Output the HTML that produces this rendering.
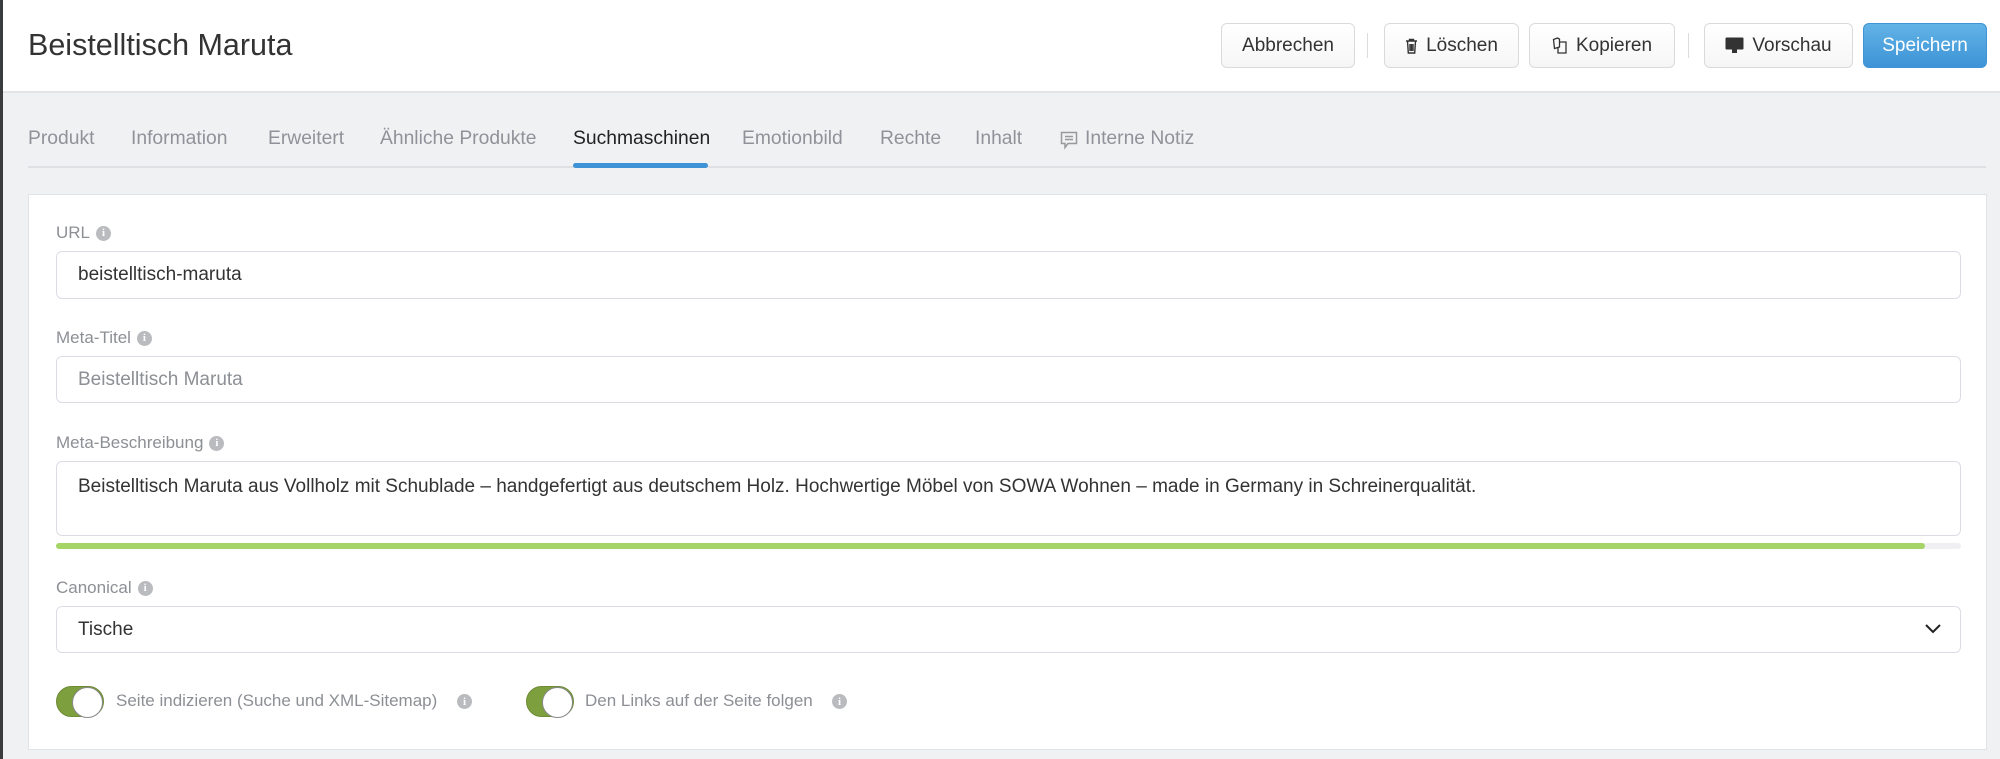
<!DOCTYPE html>
<html><head><meta charset="utf-8"><style>
*{box-sizing:border-box;margin:0;padding:0}
body{width:2000px;height:759px;overflow:hidden;background:#f0f1f3;font-family:"Liberation Sans",sans-serif;position:relative;color:#333}
.a{position:absolute}
.hdr{left:0;top:0;width:2000px;height:93px;background:#fff;border-bottom:2px solid #e3e4e7}
.btn{position:absolute;top:23px;height:45px;border:1px solid #d9dadd;border-radius:6px;background:linear-gradient(#fff,#f6f6f7);font-size:19px;color:#333;display:flex;align-items:center;justify-content:center;gap:8px}
.sep{position:absolute;top:33px;width:1px;height:25px;background:#dcdcdc}
.tab{position:absolute;top:128px;font-size:19.3px;color:#8f9399}
.lbl{position:absolute;left:56px;font-size:17px;color:#8c8f94;display:flex;align-items:center;gap:6px}
.info{width:15px;height:15px;border-radius:50%;background:#b9bbbe;color:#fff;font-size:11px;font-weight:bold;display:inline-flex;align-items:center;justify-content:center;font-family:"Liberation Serif",serif}
.inp{position:absolute;left:56px;width:1905px;border:1px solid #dcdde4;border-radius:6px;background:#fff;font-size:19px;padding-left:21px;display:flex;align-items:center}
.tg{position:absolute;top:686px;width:48px;height:31px;border-radius:16px;background:#7d9f3e;border:1px solid #6e8c35}
.tg::after{content:"";position:absolute;right:0;top:0;width:29px;height:29px;border-radius:50%;background:#fff;border:1px solid #888}
.tl{position:absolute;top:691px;font-size:17px;color:#8c8f94}
</style></head><body>
<div class="a hdr"></div>
<div class="a" style="left:0;top:0;width:3px;height:759px;background:#3a3b3d"></div>
<div class="a" style="left:28px;top:28px;font-size:30.5px;color:#333">Beistelltisch Maruta</div>
<div class="btn" style="left:1221px;width:134px">Abbrechen</div>
<div class="sep" style="left:1367px"></div>
<div class="btn" style="left:1384px;width:135px"><svg width="13" height="16" viewBox="0 0 13 16" fill="none" stroke="#333" stroke-width="1.4"><path d="M1 3h11M4.5 3V1.5h4V3M2.5 3l.8 12h6.4l.8-12M5 6v7M6.5 6v7M8 6v7"/></svg>Löschen</div>
<div class="btn" style="left:1529px;width:146px"><svg width="16" height="17" viewBox="0 0 16 17" fill="none" stroke="#333" stroke-width="1.3"><path d="M1.5 2.5l4-1.5 2 1v8l-5 1.5zM7 5h7v11H6V11"/></svg>Kopieren</div>
<div class="sep" style="left:1688px"></div>
<div class="btn" style="left:1704px;width:149px"><svg width="19" height="17" viewBox="0 0 19 17"><rect x="0.5" y="0.5" width="18" height="12" rx="1" fill="#333"/><rect x="7" y="12" width="5" height="4" fill="#333"/></svg>Vorschau</div>
<div class="btn" style="left:1863px;width:124px;background:linear-gradient(#62b3e6,#3d93d6);border-color:#3e94d4;color:#fff">Speichern</div>

<div class="tab" style="left:28px">Produkt</div>
<div class="tab" style="left:131px">Information</div>
<div class="tab" style="left:268px">Erweitert</div>
<div class="tab" style="left:380px">Ähnliche Produkte</div>
<div class="tab" style="left:573px;color:#222">Suchmaschinen</div>
<div class="tab" style="left:742px">Emotionbild</div>
<div class="tab" style="left:880px">Rechte</div>
<div class="tab" style="left:975px">Inhalt</div>
<svg class="a" style="left:1060px;top:131px" width="18" height="19" viewBox="0 0 18 19" fill="none" stroke="#999" stroke-width="1.5"><path d="M1.5 1.5h15v11H8l-3 4v-4H1.5z M5 5.5h8M5 8.5h8"/></svg>
<div class="tab" style="left:1085px">Interne Notiz</div>
<div class="a" style="left:28px;top:166px;width:1958px;height:2px;background:#dfe0e3"></div>
<div class="a" style="left:573px;top:163px;width:135px;height:5px;border-radius:3px;background:#3d93d6"></div>

<div class="a" style="left:28px;top:194px;width:1959px;height:556px;background:#fff;border:1px solid #e2e3e6"></div>
<div class="lbl" style="top:223px">URL <span class="info">i</span></div>
<div class="inp" style="top:251px;height:48px;color:#333">beistelltisch-maruta</div>
<div class="lbl" style="top:328px">Meta-Titel <span class="info">i</span></div>
<div class="inp" style="top:356px;height:47px;color:#8c8f94">Beistelltisch Maruta</div>
<div class="lbl" style="top:433px">Meta-Beschreibung <span class="info">i</span></div>
<div class="inp" style="top:461px;height:75px;align-items:flex-start;padding-top:14px">Beistelltisch Maruta aus Vollholz mit Schublade – handgefertigt aus deutschem Holz. Hochwertige Möbel von SOWA Wohnen – made in Germany in Schreinerqualität.</div>
<div class="a" style="left:56px;top:543px;width:1905px;height:6px;border-radius:3px;background:#f0f0f2"></div>
<div class="a" style="left:56px;top:543px;width:1869px;height:6px;border-radius:3px;background:#a6d567"></div>
<div class="lbl" style="top:578px">Canonical <span class="info">i</span></div>
<div class="inp" style="top:606px;height:47px">Tische</div>
<svg class="a" style="left:1925px;top:624px" width="16" height="10" viewBox="0 0 16 10" fill="none" stroke="#222" stroke-width="2"><path d="M1 1l7 7 7-7"/></svg>
<div class="tg" style="left:56px"></div>
<div class="tl" style="left:116px">Seite indizieren (Suche und XML-Sitemap)</div>
<span class="info a" style="left:457px;top:694px">i</span>
<div class="tg" style="left:526px"></div>
<div class="tl" style="left:585px">Den Links auf der Seite folgen</div>
<span class="info a" style="left:832px;top:694px">i</span>
</body></html>
